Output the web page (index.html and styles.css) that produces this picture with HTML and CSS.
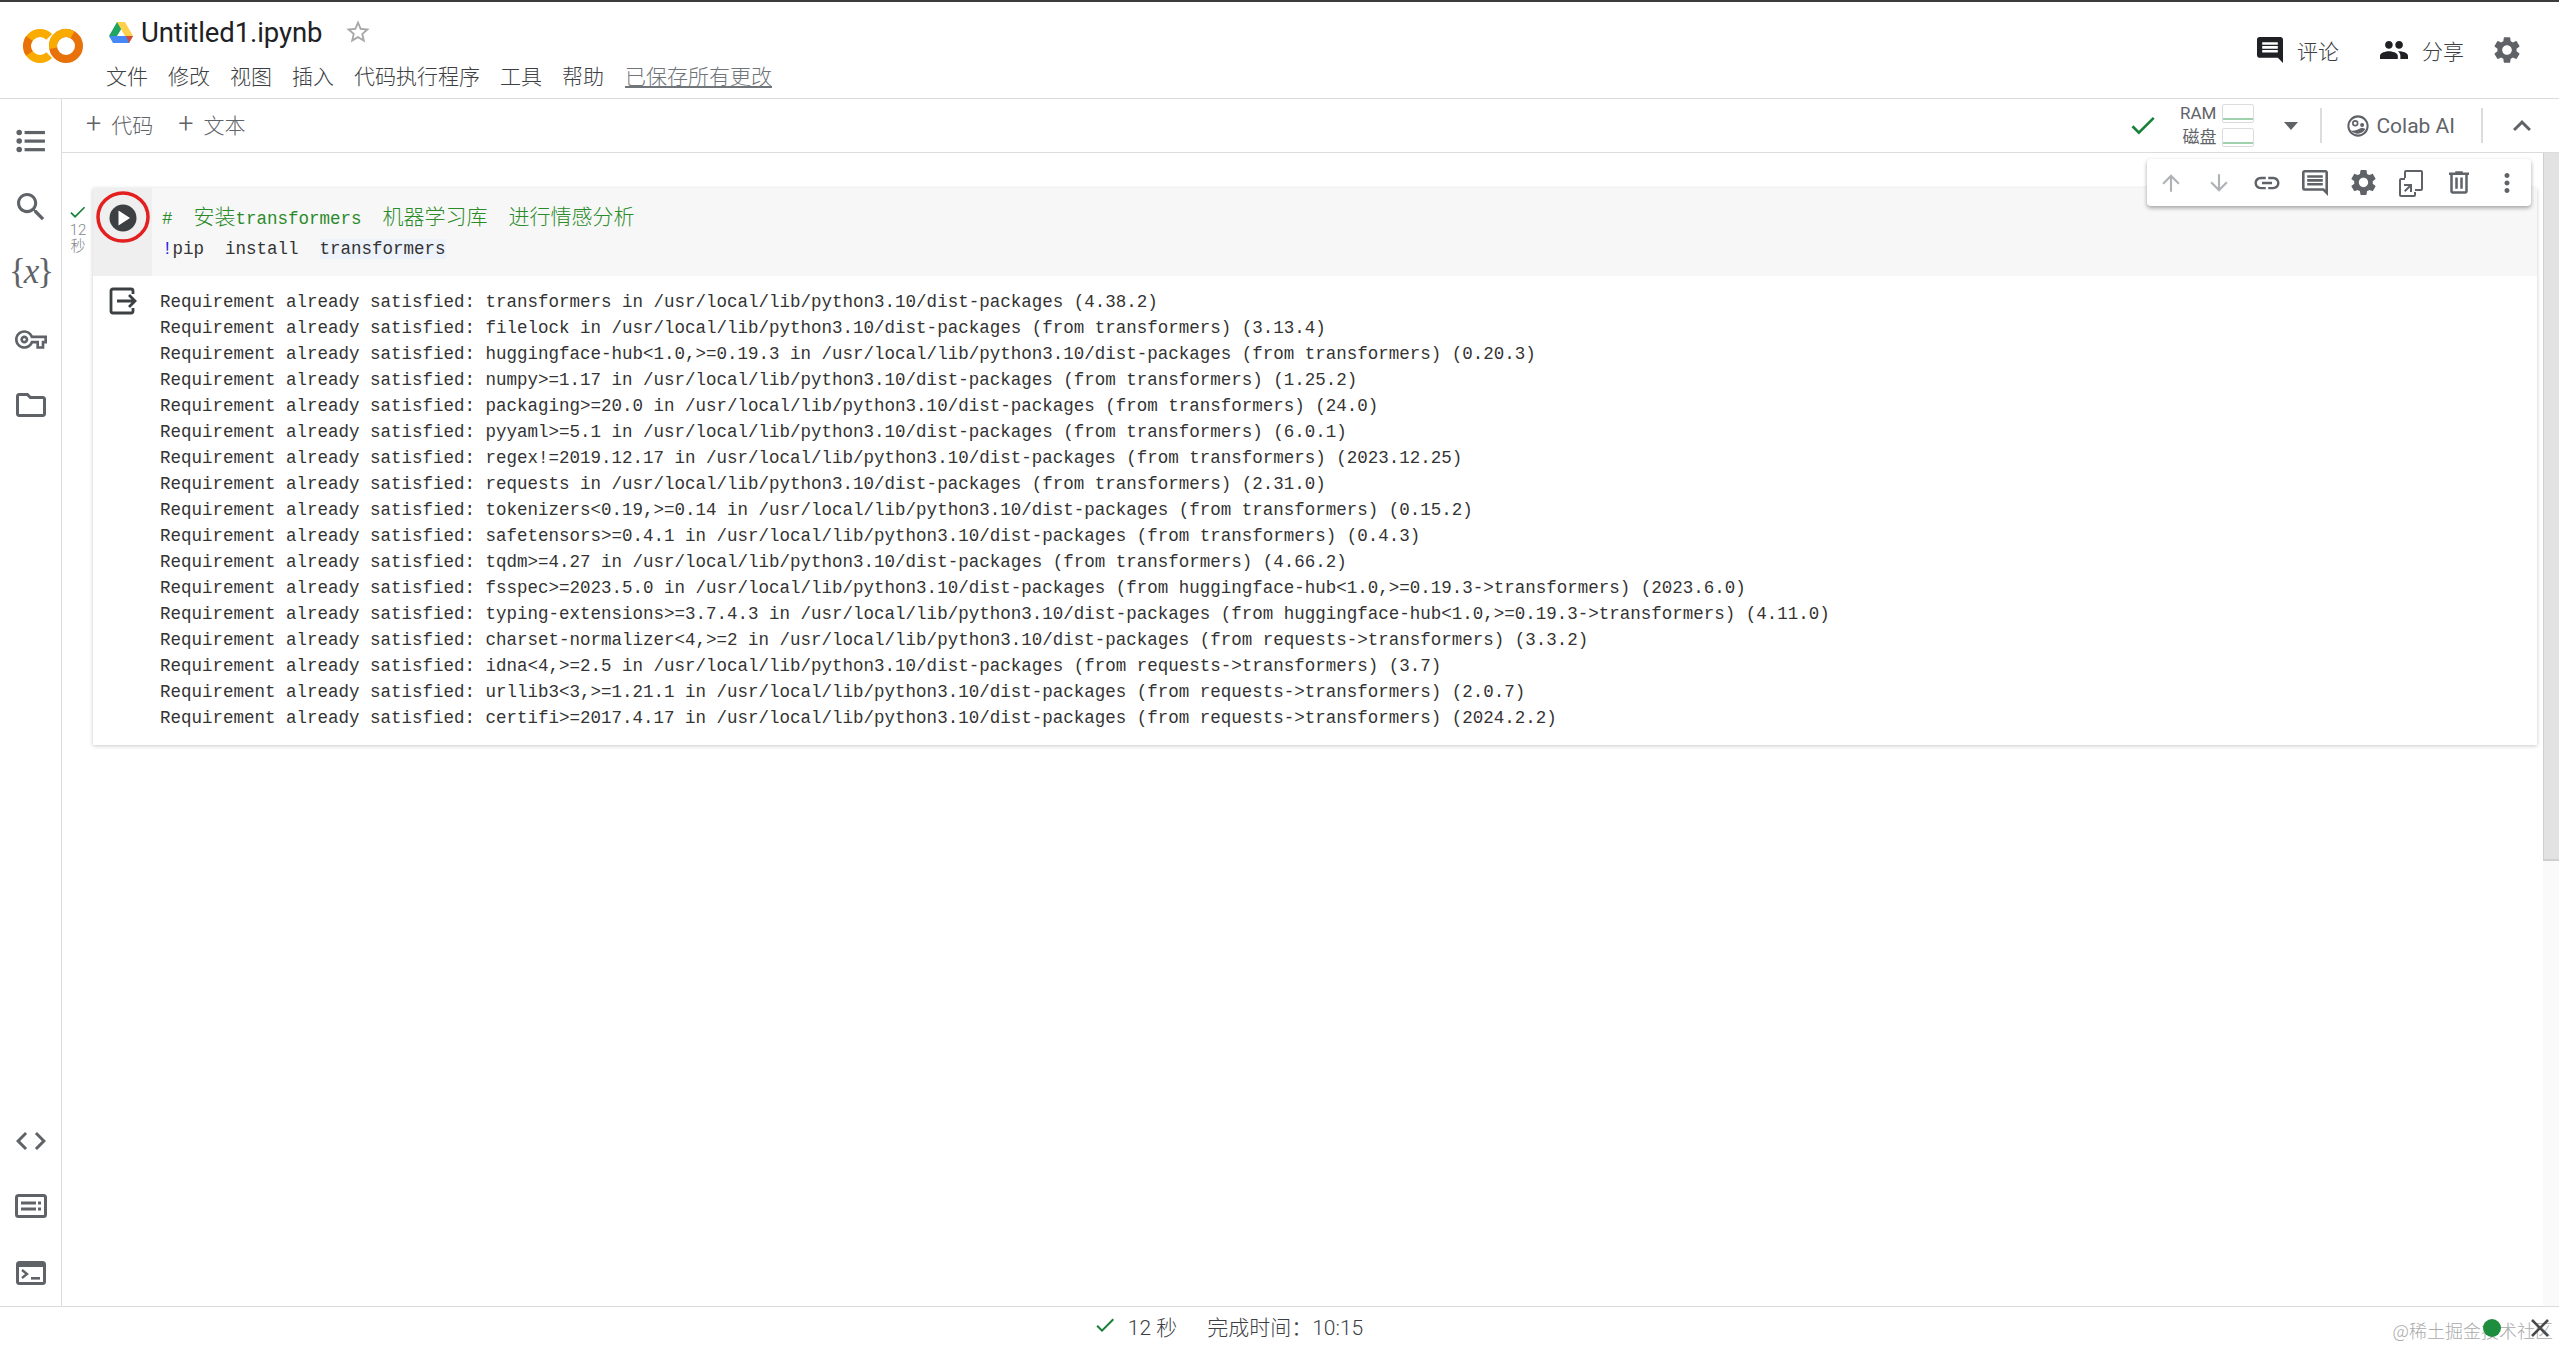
FILE: index.html
```html
<!DOCTYPE html>
<html lang="zh">
<head>
<meta charset="utf-8">
<title>Untitled1.ipynb - Colab</title>
<link rel="stylesheet" href="styles.css">
</head>
<body>
<div class="app">
  <header class="header">
    <svg class="logo" viewBox="0 0 60 38" width="60" height="38" fill="none" stroke-width="8">
      <circle cx="43" cy="19" r="13" stroke="#e8710a"/>
      <path d="M49.5 7.74A13 13 0 0 0 30.2 21.26" stroke="#f9ab00"/>
      <path d="M26.2 9.8A13 13 0 1 0 26.2 28.2" stroke="#f9ab00"/>
      <path d="M6.35 11.5A13 13 0 0 0 6.35 26.5" stroke="#e8710a"/>
    </svg>
    <div class="title-col">
      <div class="title-row">
        <svg class="drive" viewBox="0 0 24 21" width="24" height="21">
          <path d="M8 0h8l-4 7.5L8 14H0z" fill="#1fa463" transform="translate(0 0)"/>
          <path d="M8 0h8l8 14h-8z" fill="#ffd04b"/>
          <path d="M0 14h24l-4 7H4z" fill="#4688f4"/>
          <path d="M20 21l4-7h-7z" fill="#d84a38"/>
        </svg>
        <span class="title">Untitled1.ipynb</span>
        <svg class="star" viewBox="0 0 24 24" width="28" height="28"><path fill="#a8a8a8" d="M22 9.24l-7.19-.62L12 2 9.19 8.63 2 9.24l5.46 4.73L5.82 21 12 17.27 18.18 21l-1.63-7.03L22 9.24zM12 15.4l-3.76 2.27 1-4.28-3.32-2.88 4.38-.38L12 6.1l1.71 4.04 4.38.38-3.32 2.88 1 4.28L12 15.4z"/></svg>
      </div>
      <nav class="menu">
        <span>文件</span><span>修改</span><span>视图</span><span>插入</span><span>代码执行程序</span><span>工具</span><span>帮助</span><span class="saved">已保存所有更改</span>
      </nav>
    </div>
    <div class="actions">
      <div class="action">
        <svg class="icon-comment" viewBox="2 2 20 20" width="26" height="26"><path fill="#202124" d="M21.99 4c0-1.1-.89-2-1.99-2H4c-1.1 0-2 .9-2 2v12c0 1.1.9 2 2 2h14l4 4-.01-18zM18 14H6v-2h12v2zm0-3H6V9h12v2zm0-3H6V6h12v2z"/></svg>
        <span>评论</span>
      </div>
      <div class="action">
        <svg viewBox="1 4 22 16" width="28" height="22"><path fill="#202124" d="M16 11c1.66 0 2.99-1.34 2.99-3S17.66 5 16 5c-1.66 0-3 1.34-3 3s1.34 3 3 3zm-8 0c1.66 0 2.99-1.34 2.99-3S9.66 5 8 5C6.34 5 5 6.34 5 8s1.34 3 3 3zm0 2c-2.33 0-7 1.17-7 3.5V19h14v-2.5c0-2.33-4.67-3.5-7-3.5zm8 0c-.29 0-.62.02-.97.05 1.16.84 1.97 1.97 1.97 3.45V19h6v-2.5c0-2.33-4.67-3.5-7-3.5z"/></svg>
        <span>分享</span>
      </div>
      <svg viewBox="0 0 24 24" width="32" height="32"><path fill="#5f6368" d="M19.14 12.94c.04-.3.06-.61.06-.94 0-.32-.02-.64-.07-.94l2.03-1.58c.18-.14.23-.41.12-.61l-1.92-3.32c-.12-.22-.37-.29-.59-.22l-2.39.96c-.5-.38-1.03-.7-1.62-.94l-.36-2.54c-.04-.24-.24-.41-.48-.41h-3.84c-.24 0-.43.17-.47.41l-.36 2.54c-.59.24-1.13.57-1.62.94l-2.39-.96c-.22-.08-.47 0-.59.22L2.74 8.87c-.12.21-.08.47.12.61l2.03 1.58c-.05.3-.09.63-.09.94s.02.64.07.94l-2.03 1.58c-.18.14-.23.41-.12.61l1.92 3.32c.12.22.37.29.59.22l2.39-.96c.5.38 1.03.7 1.62.94l.36 2.54c.05.24.24.41.48.41h3.84c.24 0 .44-.17.47-.41l.36-2.54c.59-.24 1.13-.56 1.62-.94l2.39.96c.22.08.47 0 .59-.22l1.92-3.32c.12-.22.07-.47-.12-.61l-2.01-1.58zM12 15.6c-1.98 0-3.6-1.62-3.6-3.6s1.62-3.6 3.6-3.6 3.6 1.62 3.6 3.6-1.62 3.6-3.6 3.6z"/></svg>
    </div>
  </header>

  <div class="body">
    <aside class="side">
      <div class="side-group">
        <div class="side-item"><svg viewBox="0 0 28 24" width="30" height="26"><g fill="#5f6368"><circle cx="3" cy="4" r="2.6"/><circle cx="3" cy="12" r="2.6"/><circle cx="3" cy="20" r="2.6"/><rect x="8" y="2.6" width="19" height="3"/><rect x="8" y="10.6" width="19" height="3"/><rect x="8" y="18.6" width="19" height="3"/></g></svg></div>
        <div class="side-item"><svg viewBox="3 3 18 18" width="28" height="28"><path fill="#5f6368" d="M15.5 14h-.79l-.28-.27C15.41 12.59 16 11.11 16 9.5 16 5.91 13.09 3 9.5 3S3 5.91 3 9.5 5.91 16 9.5 16c1.61 0 3.09-.59 4.23-1.57l.27.28v.79l5 4.99L20.49 19l-4.99-5zm-6 0C7.01 14 5 11.99 5 9.5S7.01 5 9.5 5 14 7.01 14 9.5 11.99 14 9.5 14z"/></svg></div>
        <div class="side-item var-icon">{<i>x</i>}</div>
        <div class="side-item"><svg viewBox="0 5 24 14" width="32" height="19"><path fill="#5f6368" d="M22 19h-6v-4h-2.68c-1.14 2.42-3.6 4-6.32 4-3.86 0-7-3.14-7-7s3.14-7 7-7c2.72 0 5.17 1.58 6.32 4H24v6h-2v4zm-4-2h2v-4h2v-2H11.94l-.23-.67C11.01 8.34 9.11 7 7 7c-2.76 0-5 2.24-5 5s2.24 5 5 5c2.11 0 4.01-1.34 4.71-3.33l.23-.67H18v4zM7 15c-1.65 0-3-1.35-3-3s1.35-3 3-3 3 1.35 3 3-1.35 3-3 3zm0-4c-.55 0-1 .45-1 1s.45 1 1 1 1-.45 1-1-.45-1-1-1z"/></svg></div>
        <div class="side-item"><svg viewBox="2 4 20 16" width="30" height="24"><path fill="#5f6368" d="M9.17 6l2 2H20v10H4V6h5.17M10 4H4c-1.1 0-1.99.9-1.99 2L2 18c0 1.1.9 2 2 2h16c1.1 0 2-.9 2-2V8c0-1.1-.9-2-2-2h-8l-2-2z"/></svg></div>
      </div>
      <div class="side-group">
        <div class="side-item"><svg viewBox="2 6 20 12" width="30" height="18"><path fill="#5f6368" d="M9.4 16.6L4.8 12l4.6-4.6L8 6l-6 6 6 6 1.4-1.4zm5.2 0l4.6-4.6-4.6-4.6L16 6l6 6-6 6-1.4-1.4z"/></svg></div>
        <div class="side-item snippet"><svg viewBox="0 0 32 24" width="32" height="24"><rect x="1.5" y="1.5" width="29" height="21" rx="2" fill="none" stroke="#5f6368" stroke-width="3"/><g fill="#5f6368"><rect x="6" y="7.5" width="15" height="3"/><rect x="6" y="13.5" width="15" height="3"/><rect x="23" y="7.5" width="3" height="3"/><rect x="23" y="13.5" width="3" height="3"/></g></svg></div>
        <div class="side-item"><svg viewBox="0 0 30 24" width="30" height="24"><rect x="1.5" y="1.5" width="27" height="21" rx="2" fill="none" stroke="#5f6368" stroke-width="3"/><rect x="1" y="1" width="28" height="5" fill="#5f6368"/><path d="M6 9l5 4-5 4" fill="none" stroke="#5f6368" stroke-width="2.4"/><rect x="15" y="16" width="9" height="2.6" fill="#5f6368"/></svg></div>
      </div>
    </aside>

    <main class="main">
      <div class="toolbar">
        <div class="add"><span class="plus">+</span><span>代码</span></div>
        <div class="add"><span class="plus">+</span><span>文本</span></div>
        <div class="tool-right">
          <svg class="conn-check" viewBox="3 5 19 15" width="25" height="20"><path fill="#188038" d="M9 16.17L4.83 12l-1.42 1.41L9 19 21 7l-1.41-1.41z"/></svg>
          <div class="meters">
            <div class="meter"><span>RAM</span><div class="meter-box"></div></div>
            <div class="meter"><span>磁盘</span><div class="meter-box"></div></div>
          </div>
          <div class="caret"></div>
          <div class="divider"></div>
          <div class="colab-ai">
            <svg viewBox="0 0 24 24" width="22" height="22" fill="none"><circle cx="12" cy="12" r="10.5" stroke="#5f6368" stroke-width="2.2"/><circle cx="9" cy="9" r="2.6" stroke="#5f6368" stroke-width="1.8"/><circle cx="16.5" cy="11" r="2.2" fill="#5f6368"/><path d="M4 17c4 1 8-1 12-3l4 1c-2 5-10 8-16 2z" fill="#5f6368"/></svg>
            <span>Colab AI</span>
          </div>
          <div class="divider"></div>
          <svg class="chevron" viewBox="6 8 12 8" width="18" height="12"><path fill="#5f6368" d="M12 8l-6 6 1.41 1.41L12 10.83l4.59 4.58L18 14z"/></svg>
        </div>
      </div>

      <div class="content">
        <div class="notebook">
          <div class="cell-tools">
            <div class="tool dim"><svg viewBox="0 0 24 24" width="26" height="26"><path d="M4 12l1.41 1.41L11 7.83V20h2V7.83l5.58 5.59L20 12l-8-8-8 8z"/></svg></div>
            <div class="tool dim"><svg viewBox="0 0 24 24" width="26" height="26"><path d="M20 12l-1.41-1.41L13 16.17V4h-2v12.17l-5.58-5.59L4 12l8 8 8-8z"/></svg></div>
            <div class="tool"><svg viewBox="0 0 24 24" width="30" height="30"><path d="M3.9 12c0-1.71 1.39-3.1 3.1-3.1h4V7H7c-2.76 0-5 2.24-5 5s2.24 5 5 5h4v-1.9H7c-1.71 0-3.1-1.39-3.1-3.1zM8 13h8v-2H8v2zm9-6h-4v1.9h4c1.71 0 3.1 1.39 3.1 3.1s-1.39 3.1-3.1 3.1h-4V17h4c2.76 0 5-2.24 5-5s-2.24-5-5-5z"/></svg></div>
            <div class="tool"><svg viewBox="2 2 20 20" width="26" height="26"><path d="M21.99 4c0-1.1-.89-2-1.99-2H4c-1.1 0-2 .9-2 2v12c0 1.1.9 2 2 2h14l4 4-.01-18zM20 4v13.17L18.83 16H4V4h16zM6 12h12v2H6zm0-3h12v2H6zm0-3h12v2H6z"/></svg></div>
            <div class="tool"><svg viewBox="0 0 24 24" width="31" height="31"><path d="M19.14 12.94c.04-.3.06-.61.06-.94 0-.32-.02-.64-.07-.94l2.03-1.58c.18-.14.23-.41.12-.61l-1.92-3.32c-.12-.22-.37-.29-.59-.22l-2.39.96c-.5-.38-1.03-.7-1.62-.94l-.36-2.54c-.04-.24-.24-.41-.48-.41h-3.84c-.24 0-.43.17-.47.41l-.36 2.54c-.59.24-1.13.57-1.62.94l-2.39-.96c-.22-.08-.47 0-.59.22L2.74 8.87c-.12.21-.08.47.12.61l2.03 1.58c-.05.3-.09.63-.09.94s.02.64.07.94l-2.03 1.58c-.18.14-.23.41-.12.61l1.92 3.32c.12.22.37.29.59.22l2.39-.96c.5.38 1.03.7 1.62.94l.36 2.54c.05.24.24.41.48.41h3.84c.24 0 .44-.17.47-.41l.36-2.54c.59-.24 1.13-.56 1.62-.94l2.39.96c.22.08.47 0 .59-.22l1.92-3.32c.12-.22.07-.47-.12-.61l-2.01-1.58zM12 15.6c-1.98 0-3.6-1.62-3.6-3.6s1.62-3.6 3.6-3.6 3.6 1.62 3.6 3.6-1.62 3.6-3.6 3.6z"/></svg></div>
            <div class="tool"><svg viewBox="0 0 24 28" width="24" height="28"><path d="M7 1h15a2 2 0 0 1 2 2v17a2 2 0 0 1-2 2h-6v-2h6V3H7v6H5V3a2 2 0 0 1 2-2z"/><path d="M2 9h4v2H2v15h13v-3h2v3a2 2 0 0 1-2 2H2a2 2 0 0 1-2-2V11a2 2 0 0 1 2-2z"/><path d="M5 16h8v8h-2v-4.6L6.4 24 5 22.6 9.6 18H5z" transform="matrix(1 0 0 1 0 -1)"/></svg></div>
            <div class="tool"><svg viewBox="4 3 16 18" width="20" height="23"><path d="M15 4V3H9v1H4v2h1v13c0 1.1.9 2 2 2h10c1.1 0 2-.9 2-2V6h1V4h-5zm2 15H7V6h10v13zM9 8h2v9H9zm4 0h2v9h-2z"/></svg></div>
            <div class="tool"><svg viewBox="0 0 24 24" width="30" height="30"><path d="M12 8c1.1 0 2-.9 2-2s-.9-2-2-2-2 .9-2 2 .9 2 2 2zm0 2c-1.1 0-2 .9-2 2s.9 2 2 2 2-.9 2-2-.9-2-2-2zm0 6c-1.1 0-2 .9-2 2s.9 2 2 2 2-.9 2-2-.9-2-2-2z"/></svg></div>
          </div>

          <section class="cell">
            <div class="exec-status">
              <svg viewBox="3 5 19 15" width="16" height="13"><path fill="#188038" d="M9 16.17L4.83 12l-1.42 1.41L9 19 21 7l-1.41-1.41z"/></svg>
              <span>12</span>
              <span>秒</span>
            </div>
            <div class="cell-head">
              <div class="run-gutter">
                <svg viewBox="0 0 59 60" width="59" height="60">
                  <circle cx="30" cy="30" r="13.5" fill="#3c4043"/>
                  <path d="M25.5 22.5L37 30l-11.5 7.5z" fill="#fff"/>
                  <ellipse cx="30" cy="29" rx="25" ry="24" fill="none" stroke="#e3201f" stroke-width="3.5"/>
                </svg>
              </div>
              <div class="code">
                <div class="code-line comment"># &nbsp;<span class="cjk">安装</span>transformers &nbsp;<span class="cjk">机器学习库</span> &nbsp;<span class="cjk">进行情感分析</span></div>
                <div class="code-line command"><span class="bang">!</span>pip &nbsp;install &nbsp;<span class="hl">transformers</span></div>
              </div>
            </div>
            <div class="cell-output">
              <div class="out-gutter">
                <svg viewBox="0 0 28 28" width="28" height="28" fill="none" stroke="#3c4043" stroke-width="2.8"><path d="M24 7V4a2 2 0 0 0-2-2H4a2 2 0 0 0-2 2v20a2 2 0 0 0 2 2h18a2 2 0 0 0 2-2v-3"/><path d="M8 14h18M20 8l6 6-6 6"/></svg>
              </div>
<pre class="output">Requirement already satisfied: transformers in /usr/local/lib/python3.10/dist-packages (4.38.2)
Requirement already satisfied: filelock in /usr/local/lib/python3.10/dist-packages (from transformers) (3.13.4)
Requirement already satisfied: huggingface-hub&lt;1.0,&gt;=0.19.3 in /usr/local/lib/python3.10/dist-packages (from transformers) (0.20.3)
Requirement already satisfied: numpy&gt;=1.17 in /usr/local/lib/python3.10/dist-packages (from transformers) (1.25.2)
Requirement already satisfied: packaging&gt;=20.0 in /usr/local/lib/python3.10/dist-packages (from transformers) (24.0)
Requirement already satisfied: pyyaml&gt;=5.1 in /usr/local/lib/python3.10/dist-packages (from transformers) (6.0.1)
Requirement already satisfied: regex!=2019.12.17 in /usr/local/lib/python3.10/dist-packages (from transformers) (2023.12.25)
Requirement already satisfied: requests in /usr/local/lib/python3.10/dist-packages (from transformers) (2.31.0)
Requirement already satisfied: tokenizers&lt;0.19,&gt;=0.14 in /usr/local/lib/python3.10/dist-packages (from transformers) (0.15.2)
Requirement already satisfied: safetensors&gt;=0.4.1 in /usr/local/lib/python3.10/dist-packages (from transformers) (0.4.3)
Requirement already satisfied: tqdm&gt;=4.27 in /usr/local/lib/python3.10/dist-packages (from transformers) (4.66.2)
Requirement already satisfied: fsspec&gt;=2023.5.0 in /usr/local/lib/python3.10/dist-packages (from huggingface-hub&lt;1.0,&gt;=0.19.3-&gt;transformers) (2023.6.0)
Requirement already satisfied: typing-extensions&gt;=3.7.4.3 in /usr/local/lib/python3.10/dist-packages (from huggingface-hub&lt;1.0,&gt;=0.19.3-&gt;transformers) (4.11.0)
Requirement already satisfied: charset-normalizer&lt;4,&gt;=2 in /usr/local/lib/python3.10/dist-packages (from requests-&gt;transformers) (3.3.2)
Requirement already satisfied: idna&lt;4,&gt;=2.5 in /usr/local/lib/python3.10/dist-packages (from requests-&gt;transformers) (3.7)
Requirement already satisfied: urllib3&lt;3,&gt;=1.21.1 in /usr/local/lib/python3.10/dist-packages (from requests-&gt;transformers) (2.0.7)
Requirement already satisfied: certifi&gt;=2017.4.17 in /usr/local/lib/python3.10/dist-packages (from requests-&gt;transformers) (2024.2.2)</pre>
            </div>
          </section>
        </div>
        <div class="scrollbar"><div class="thumb"></div></div>
      </div>
    </main>
  </div>

  <footer class="status">
    <svg viewBox="3 5 19 15" width="19" height="15"><path fill="#188038" d="M9 16.17L4.83 12l-1.42 1.41L9 19 21 7l-1.41-1.41z"/></svg>
    <span class="status-time">12 秒</span>
    <span>完成时间：10:15</span>
    <div class="watermark">@稀土掘金技术社区</div>
    <div class="green-dot"></div>
    <svg class="status-close" viewBox="0 0 20 20" width="20" height="20"><path d="M2 2l16 16M18 2L2 18" stroke="#4a4a4a" stroke-width="2.6"/></svg>
  </footer>
</div>
</body>
</html>
```
FILE: styles.css
```css
* { box-sizing: border-box; }
html, body { margin: 0; height: 100%; overflow: hidden; }
body {
  background: #fff;
  color: #3c4043;
  font-family: Roboto, "Noto Sans CJK SC", sans-serif;
}
.app { display: flex; flex-direction: column; height: 100vh; }

/* header */
.header {
  display: flex;
  height: 99px;
  flex: none;
  border-top: 2px solid #3c3c3c;
  border-bottom: 1px solid #dadce0;
  position: relative;
}
.logo { margin: 25px 0 0 23px; flex: none; }
.title-col { margin-left: 23px; display: flex; flex-direction: column; }
.title-row { display: flex; align-items: center; height: 32px; margin-top: 14px; }
.drive { margin-left: 3px; }
.title { font-size: 27.5px; color: #202124; margin-left: 8px; letter-spacing: -0.1px; }
.star { margin-left: 22px; }
.menu { display: flex; gap: 20px; margin-top: 12px; font-size: 21px; line-height: 30px; color: #3c4043; font-weight: 300; font-family: "Noto Sans CJK SC", sans-serif; }
.saved { color: #70757a; text-decoration: underline; margin-left: 1px; }
.actions { margin-left: auto; display: flex; align-items: center; padding-right: 36px; margin-top: -1px; font-size: 21px; font-family: "Noto Sans CJK SC", sans-serif; font-weight: 300; color: #3c4043; }
.action { display: flex; align-items: center; gap: 14px; margin-right: 41px; }
.action + .action { margin-right: 27px; }
.action + svg { flex: none; }

/* body */
.body { display: flex; flex: 1; min-height: 0; }
.side {
  width: 62px;
  flex: none;
  border-right: 1px solid #dadce0;
  display: flex;
  flex-direction: column;
  justify-content: space-between;
  padding: 9px 0 0;
}
.side-group { display: flex; flex-direction: column; }
.side-item { height: 66px; display: flex; align-items: center; justify-content: center; }
.snippet svg { margin-top: -3px; }
.var-icon { font-family: "Liberation Serif", serif; font-size: 35px; color: #5f6368; padding-bottom: 3px; letter-spacing: -2px; }
.var-icon i { font-size: 35px; }

.main { flex: 1; min-width: 0; display: flex; flex-direction: column; }
.toolbar {
  display: flex;
  align-items: center;
  height: 54px;
  flex: none;
  border-bottom: 1px solid #dadce0;
  padding-left: 24px;
  gap: 25px;
  font-size: 21px;
  color: #5f6368;
}
.add { display: flex; align-items: center; gap: 10px; font-family: "Noto Sans CJK SC", sans-serif; font-weight: 300; margin-top: -4px; }
.plus { font-size: 27px; font-family: Roboto, sans-serif; }
.tool-right { margin-left: auto; display: flex; align-items: center; padding-right: 28px; }
.conn-check { margin-right: 24px; }
.meters { display: flex; flex-direction: column; gap: 5px; }
.meter { display: flex; align-items: center; justify-content: flex-end; gap: 6px; font-size: 17px; line-height: 19px; color: #5f6368; }
.meter-box {
  width: 32px;
  height: 19px;
  border: 1px solid #dadce0;
  border-radius: 2px;
  background: linear-gradient(to bottom, #fff 0, #fff 13px, #a0d2ae 13px, #a0d2ae 15px, #fff 15px);
}
.caret { width: 0; height: 0; border: 7px solid transparent; border-top: 8px solid #5f6368; border-bottom: 0; margin: 0 22px 0 30px; }
.divider { width: 2px; height: 35px; background: #dadce0; }
.colab-ai { display: flex; align-items: center; gap: 7px; font-size: 21px; margin: 0 26px 0 25px; }
.chevron { margin-left: 30px; }

.content { flex: 1; min-height: 0; display: flex; }
.notebook { flex: 1; min-width: 0; position: relative; padding: 35px 6px 0 31px; }
.scrollbar { width: 16px; flex: none; background: #fafafa; }
.thumb { height: 708px; background: #e2e2e2; border-left: 1px solid #cfcfcf; border-bottom: 2px solid #cfcfcf; }

.cell-tools {
  position: absolute;
  top: 6px;
  right: 12px;
  display: flex;
  height: 47px;
  background: #fff;
  border-radius: 4px;
  box-shadow: 0 2px 4px rgba(0,0,0,.35);
  z-index: 2;
}
.tool { width: 48px; display: flex; align-items: center; justify-content: center; fill: #5f6368; }
.tool.dim { fill: #b0b3b6; }

.cell {
  position: relative;
  box-shadow: 0 1px 4px rgba(0,0,0,.22);
  background: #fff;
}
.exec-status {
  position: absolute;
  left: -27px;
  top: 18px;
  width: 24px;
  display: flex;
  flex-direction: column;
  align-items: center;
  font-size: 15px;
  line-height: 16px;
  color: #80868b;
  font-weight: 300;
}
.exec-status svg { margin-bottom: 3px; }
.cell-head { display: flex; height: 88px; background: #f7f7f7; }
.run-gutter { width: 59px; background: #efefef; flex: none; }
.code { padding: 12px 0 0 10px; }
.code-line, .output {
  font-family: "Liberation Mono", monospace;
  font-size: 17.5px;
  color: #333;
}
.code-line { line-height: 31px; height: 31px; white-space: nowrap; }
.command { margin-top: 3px; }
.comment { color: #2a8b2a; }
.cjk { font-family: "Noto Sans CJK SC", sans-serif; font-size: 21px; font-weight: 300; }
.bang { color: #2a2ae0; }
.hl { background: #edf2fb; }
.cell-output { display: flex; padding: 13px 0 14px; }
.out-gutter { width: 67px; flex: none; padding-left: 16px; margin-top: -2px; }
.output { margin: 0; line-height: 26px; }

/* status */
.status {
  height: 42px;
  flex: none;
  border-top: 1px solid #dadce0;
  position: relative;
  display: flex;
  align-items: center;
  justify-content: center;
  gap: 13px;
  padding: 0 100px 4px 0;
  font-size: 21px;
  color: #3c4043;
  font-family: Roboto, "Noto Sans CJK SC", sans-serif;
  font-weight: 300;
}
.status-time { margin-right: 17px; }
.watermark {
  position: absolute;
  right: 6px;
  top: 11px;
  font-size: 18px;
  line-height: 24px;
  color: #aaa;
  font-family: "Noto Sans CJK SC", sans-serif;
}
.green-dot {
  position: absolute;
  left: 2483px;
  top: 12px;
  width: 18px;
  height: 18px;
  border-radius: 50%;
  background: #1e8e3e;
}
.status-close { position: absolute; left: 2530px; top: 11px; }
```
